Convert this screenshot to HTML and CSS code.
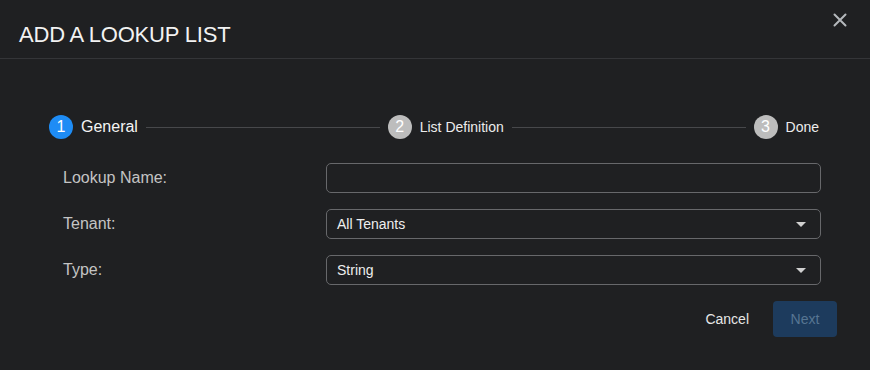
FILE: index.html
```html
<!DOCTYPE html>
<html lang="en">

<head>
    <meta charset="UTF-8" />
    <title>Add a Lookup List</title>
    <link rel="stylesheet" href="styles.css">
</head>

<body>
    <div class="dialog">
        <!-- Header -->
        <div class="dialog-header">
            <h1 class="dialog-title">ADD A LOOKUP LIST</h1>
            <button class="close-btn" aria-label="Close">
                <svg width="14" height="14" viewBox="0 0 14 14">
                    <path d="M1.5 1.5 L12.5 12.5 M12.5 1.5 L1.5 12.5" stroke="#b4b8bc" stroke-width="2" stroke-linecap="round" />
                </svg>
            </button>
        </div>

        <div class="dialog-body">
            <!-- Stepper -->
            <div class="stepper">
                <div class="step active">
                    <span class="step-num">1</span>
                    <span class="step-label">General</span>
                </div>
                <div class="step-line"></div>
                <div class="step">
                    <span class="step-num">2</span>
                    <span class="step-label">List Definition</span>
                </div>
                <div class="step-line"></div>
                <div class="step">
                    <span class="step-num">3</span>
                    <span class="step-label">Done</span>
                </div>
            </div>

            <!-- Form -->
            <div class="form">
                <div class="form-row">
                    <label class="form-label">Lookup Name:</label>
                    <input type="text" class="form-input" />
                </div>
                <div class="form-row">
                    <label class="form-label">Tenant:</label>
                    <div class="form-select">
                        <span>All Tenants</span>
                        <span class="caret"></span>
                    </div>
                </div>
                <div class="form-row">
                    <label class="form-label">Type:</label>
                    <div class="form-select">
                        <span>String</span>
                        <span class="caret"></span>
                    </div>
                </div>
            </div>

            <!-- Actions -->
            <div class="dialog-actions">
                <button class="cancel-btn">Cancel</button>
                <button class="next-btn" disabled>Next</button>
            </div>
        </div>
    </div>
</body>

</html>
```

FILE: styles.css
```css
body {
    font-family: "Liberation Sans", Arial, sans-serif;
    background-color: #1f2022;
    margin: 0;
    padding: 0;
}

.dialog {
    width: 870px;
    height: 370px;
    box-sizing: border-box;
}

.dialog-header {
    display: flex;
    justify-content: space-between;
    align-items: flex-start;
    height: 59px;
    box-sizing: border-box;
    padding: 0 22px 0 19px;
    border-bottom: 1px solid #343538;
}

.dialog-title {
    margin: 22px 0 0;
    font-size: 22px;
    font-weight: normal;
    color: #f2f2f2;
    letter-spacing: -0.2px;
}

.close-btn {
    background: none;
    border: none;
    padding: 0;
    margin-top: 12px;
    width: 16px;
    height: 16px;
    display: flex;
    align-items: center;
    justify-content: center;
    cursor: pointer;
}

.dialog-body {
    padding-top: 56px;
}

/* Stepper */
.stepper {
    display: flex;
    align-items: center;
    padding: 0 51px 0 49px;
    height: 24px;
}

.step {
    display: flex;
    align-items: center;
    gap: 8px;
}

.step-num {
    width: 24px;
    height: 24px;
    border-radius: 50%;
    background-color: #bdbdbd;
    color: #fff;
    font-size: 16px;
    line-height: 24px;
    text-align: center;
}

.step.active .step-num {
    background-color: #1e8cf5;
}

.step-label {
    font-size: 14px;
    color: #ececec;
}

.step.active .step-label {
    font-size: 16px;
    color: #f4f4f4;
}

.step-line {
    flex: 1;
    height: 1px;
    background-color: #47484b;
    margin: 0 8px;
}

/* Form */
.form {
    display: flex;
    flex-direction: column;
    gap: 16px;
    padding: 24px 49px 0 63px;
}

.form-row {
    display: flex;
    align-items: center;
}

.form-label {
    width: 263px;
    font-size: 16px;
    color: #c4c4c4;
}

.form-input,
.form-select {
    flex: 1;
    height: 30px;
    box-sizing: border-box;
    border: 1px solid #67686b;
    border-radius: 5px;
    background: transparent;
    color: #eee;
    font-family: inherit;
    font-size: 14px;
    padding: 0 10px;
}

.form-select {
    display: flex;
    align-items: center;
    justify-content: space-between;
    padding-right: 14px;
}

.caret {
    width: 0;
    height: 0;
    border-left: 5px solid transparent;
    border-right: 5px solid transparent;
    border-top: 5px solid #d0d0d0;
}

/* Actions */
.dialog-actions {
    display: flex;
    justify-content: flex-end;
    align-items: center;
    gap: 12px;
    padding: 16px 33px 0 0;
}

.cancel-btn {
    background: none;
    border: none;
    color: #e6e6e6;
    font-family: inherit;
    font-size: 14px;
    padding: 0 12px;
    height: 36px;
    cursor: pointer;
}

.next-btn {
    width: 64px;
    height: 36px;
    border: none;
    border-radius: 4px;
    background-color: #1d3b5d;
    color: #577592;
    font-family: inherit;
    font-size: 14px;
}
```
